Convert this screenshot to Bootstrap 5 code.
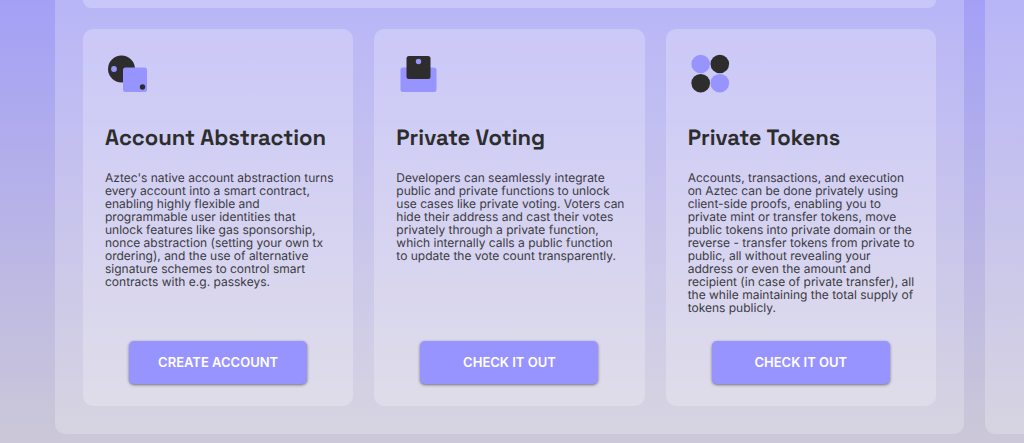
<!DOCTYPE html>
<html lang="en">
<head>
<meta charset="utf-8">
<meta name="viewport" content="width=device-width, initial-scale=1">
<title>Aztec tutorials</title>
<link href="https://cdn.jsdelivr.net/npm/bootstrap@5.3.0/dist/css/bootstrap.min.css" rel="stylesheet">
<style>
body { font-family: "Inter", sans-serif; color: #2d2d2d; min-height: 100vh; background: linear-gradient(180deg, #a4a0f6, #ccc8d8) no-repeat; overflow-x: hidden; text-rendering: geometricPrecision; }
.slides { gap: 21px; padding: 0 60px 9px 55px; overflow: hidden; }
.slide { flex: 0 0 100%; padding: 0 28px 28px; background: rgba(255,255,255,.23); border-radius: 0 0 10px 10px; }
.previous { height: 8px; margin-bottom: 21px; background: rgba(255,255,255,.24); border-radius: 0 0 10px 10px; }
.topics { --bs-gutter-x: 21px; }
.topic { padding: 22px; background: rgba(255,255,255,.24); border-radius: 10px; }
.topic svg { width: 44px; height: 44px; }
.topic h2 { font-size: 22px; line-height: 28px; font-weight: 600; font-family: "Space Grotesk", "Inter", sans-serif; margin: 29px 0 19px; white-space: nowrap; }
.topic p { font-size: 12px; line-height: 13px; color: #3b3a42; margin: 0 -4px 27px 0; }
.btn-topic { width: 178px; height: 43px; font-size: 13px; font-weight: 600; text-transform: uppercase; border-radius: 5px; --bs-btn-color: #fff; --bs-btn-bg: #9894ff; --bs-btn-hover-color: #fff; --bs-btn-hover-bg: #8983f5; box-shadow: 0 1px 3px rgba(0,0,0,.5); }
</style>
</head>
<body>
<main class="slides d-flex">
  <section class="slide">
    <div class="previous"></div>
    <div class="row topics">
      <div class="col-4">
        <article class="topic h-100 d-flex flex-column">
          <svg viewBox="0 0 44 44" aria-hidden="true"><circle cx="16.500" cy="18" r="13.500" fill="#2d2d2d"/><circle cx="9" cy="18" r="2.900" fill="#9894ff"/><rect x="18" y="16.500" width="24" height="24.500" rx="2.500" fill="#9894ff"/><circle cx="37.500" cy="36" r="2.700" fill="#2d2d2d"/></svg>
          <h2>Account Abstraction</h2>
          <p>Aztec's native account abstraction turns every account into a smart contract, enabling highly flexible and programmable user identities that unlock features like gas sponsorship, nonce abstraction (setting your own tx ordering), and the use of alternative signature schemes to control smart contracts with e.g. passkeys.</p>
          <button type="button" class="btn btn-topic border-0 mt-auto mx-auto">Create account</button>
        </article>
      </div>
      <div class="col-4">
        <article class="topic h-100 d-flex flex-column">
          <svg viewBox="0 0 44 44" aria-hidden="true"><rect x="4.500" y="16.500" width="36" height="24.500" rx="2.500" fill="#9894ff"/><rect x="10.500" y="5" width="24" height="23" rx="2.500" fill="#2d2d2d"/><circle cx="22.500" cy="10.500" r="2.700" fill="#9894ff"/></svg>
          <h2>Private Voting</h2>
          <p>Developers can seamlessly integrate public and private functions to unlock use cases like private voting. Voters can hide their address and cast their votes privately through a private function, which internally calls a public function to update the vote count transparently.</p>
          <button type="button" class="btn btn-topic border-0 mt-auto mx-auto">Check it out</button>
        </article>
      </div>
      <div class="col-4">
        <article class="topic h-100 d-flex flex-column">
          <svg viewBox="0 0 44 44" aria-hidden="true"><circle cx="12.700" cy="13" r="9.300" fill="#9894ff"/><circle cx="31.800" cy="13" r="9.300" fill="#2d2d2d"/><circle cx="12.700" cy="32.200" r="9.300" fill="#2d2d2d"/><circle cx="31.800" cy="32.200" r="9.300" fill="#9894ff"/></svg>
          <h2>Private Tokens</h2>
          <p>Accounts, transactions, and execution on Aztec can be done privately using client-side proofs, enabling you to private mint or transfer tokens, move public tokens into private domain or the reverse - transfer tokens from private to public, all without revealing your address or even the amount and recipient (in case of private transfer), all the while maintaining the total supply of tokens publicly.</p>
          <button type="button" class="btn btn-topic border-0 mt-auto mx-auto">Check it out</button>
        </article>
      </div>
    </div>
  </section>
  <section class="slide" aria-hidden="true"></section>
</main>
<script src="https://cdn.jsdelivr.net/npm/bootstrap@5.3.0/dist/js/bootstrap.bundle.min.js"></script>
</body>
</html>
